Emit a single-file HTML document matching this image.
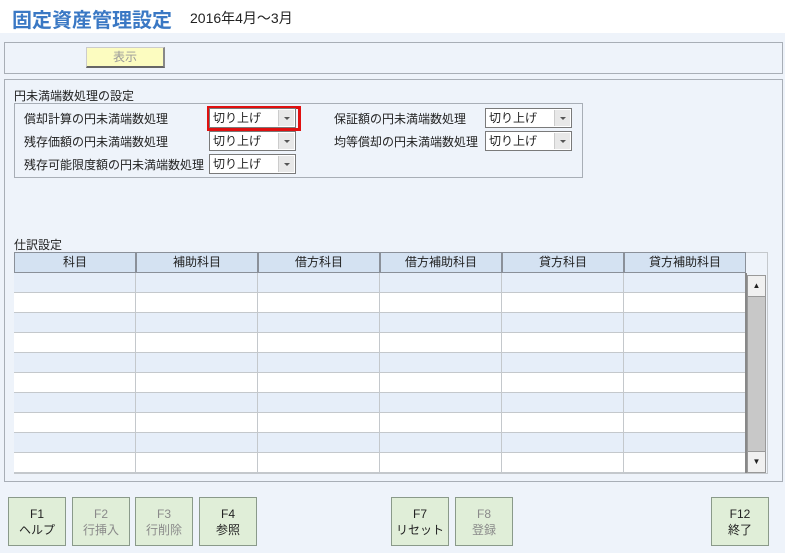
<!DOCTYPE html>
<html><head><meta charset="utf-8"><style>
*{box-sizing:border-box;margin:0;padding:0}
body{width:785px;height:553px;background:#eef3fa;font-family:"Liberation Sans","Noto Sans CJK JP",sans-serif;font-size:12px;color:#222;position:relative;overflow:hidden}
.a{position:absolute}
.title{left:0;top:0;width:785px;height:33px;background:#fff}
.title h1{position:absolute;left:12px;top:4px;font-size:20px;color:#3a78c4;font-weight:bold;letter-spacing:0px}
.title span{position:absolute;left:190px;top:8px;font-size:14px;color:#222}
.panel{border:1px solid #a8aeb6;background:#eef3fa}
.sel{position:absolute;width:87px;height:20px;background:#fff;border:1px solid #7a7a7a;font-size:12px;padding:2px 3px;line-height:14px}
.sel i{position:absolute;right:1px;top:1px;width:16px;height:16px;background:#e8e8e8;border-left:1px solid #ccc}
.sel i:after{content:"";position:absolute;left:5px;top:7px;border:3px solid transparent;border-top:3px solid #555}
.lbl{position:absolute;font-size:12px}
.hd{position:absolute;top:252px;height:21px;background:#d4e2f2;border:1px solid #8a9099;text-align:center;font-size:12px;line-height:18px}
.row{position:absolute;left:14px;width:732px;height:20px;border-bottom:1px solid #c4c8cc}
.fb{position:absolute;top:497px;width:58px;height:49px;background:#e0eed8;border:1px solid #8a9a8a;text-align:center;font-size:12px;line-height:16px;padding-top:8px}
.dis{color:#8a8a8a}
</style></head><body>
<div class="a title"><h1>固定資産管理設定</h1><span>2016年4月～3月</span></div>
<div class="a panel" style="left:4px;top:42px;width:779px;height:32px"></div>
<div class="a" style="left:86px;top:47px;width:79px;height:21px;background:#fcfcc0;border:1px solid #ccc;border-bottom:2px solid #666;border-right:2px solid #888;text-align:center;color:#999;line-height:18px">表示</div>
<div class="a panel" style="left:4px;top:79px;width:779px;height:403px"></div>
<div class="lbl" style="left:14px;top:87px">円未満端数処理の設定</div>
<div class="a" style="left:14px;top:103px;width:569px;height:75px;border:1px solid #a8aeb6"></div>
<div class="lbl" style="left:24px;top:110px">償却計算の円未満端数処理</div>
<div class="lbl" style="left:24px;top:133px">残存価額の円未満端数処理</div>
<div class="lbl" style="left:24px;top:156px">残存可能限度額の円未満端数処理</div>
<div class="lbl" style="left:334px;top:110px">保証額の円未満端数処理</div>
<div class="lbl" style="left:334px;top:133px">均等償却の円未満端数処理</div>
<div class="a" style="left:207px;top:106px;width:94px;height:25px;border:3px solid #e01010"></div>
<div class="sel" style="left:209px;top:108px">切り上げ<i></i></div>
<div class="sel" style="left:209px;top:131px">切り上げ<i></i></div>
<div class="sel" style="left:209px;top:154px">切り上げ<i></i></div>
<div class="sel" style="left:485px;top:108px">切り上げ<i></i></div>
<div class="sel" style="left:485px;top:131px">切り上げ<i></i></div>
<div class="lbl" style="left:14px;top:236px">仕訳設定</div>
<div class="a" style="left:14px;top:252px;width:754px;height:222px;border:1px solid #c4c8cc;background:#eef3fa"></div>
<div class="hd" style="left:14px;width:122px">科目</div>
<div class="hd" style="left:136px;width:122px">補助科目</div>
<div class="hd" style="left:258px;width:122px">借方科目</div>
<div class="hd" style="left:380px;width:122px">借方補助科目</div>
<div class="hd" style="left:502px;width:122px">貸方科目</div>
<div class="hd" style="left:624px;width:122px">貸方補助科目</div>
<div class="row" style="top:273px;background:#e6eef9"></div>
<div class="row" style="top:293px;background:#fff"></div>
<div class="row" style="top:313px;background:#e6eef9"></div>
<div class="row" style="top:333px;background:#fff"></div>
<div class="row" style="top:353px;background:#e6eef9"></div>
<div class="row" style="top:373px;background:#fff"></div>
<div class="row" style="top:393px;background:#e6eef9"></div>
<div class="row" style="top:413px;background:#fff"></div>
<div class="row" style="top:433px;background:#e6eef9"></div>
<div class="row" style="top:453px;background:#fff;height:20px"></div>
<div class="a" style="left:135px;top:273px;width:1px;height:200px;background:#c4c8cc"></div>
<div class="a" style="left:257px;top:273px;width:1px;height:200px;background:#c4c8cc"></div>
<div class="a" style="left:379px;top:273px;width:1px;height:200px;background:#c4c8cc"></div>
<div class="a" style="left:501px;top:273px;width:1px;height:200px;background:#c4c8cc"></div>
<div class="a" style="left:623px;top:273px;width:1px;height:200px;background:#c4c8cc"></div>
<div class="a" style="left:745px;top:273px;width:2px;height:200px;background:#888"></div>
<div class="a" style="left:747px;top:275px;width:19px;height:198px;background:#c8c8c8;border:1px solid #999"></div>
<div class="a" style="left:747px;top:275px;width:19px;height:22px;background:#f0f0f0;border:1px solid #999;text-align:center;font-size:8px;line-height:20px">▲</div>
<div class="a" style="left:747px;top:451px;width:19px;height:22px;background:#f0f0f0;border:1px solid #999;text-align:center;font-size:8px;line-height:20px">▼</div>
<div class="fb" style="left:8px">F1<br>ヘルプ</div>
<div class="fb dis" style="left:72px">F2<br>行挿入</div>
<div class="fb dis" style="left:135px">F3<br>行削除</div>
<div class="fb" style="left:199px">F4<br>参照</div>
<div class="fb" style="left:391px">F7<br>リセット</div>
<div class="fb dis" style="left:455px">F8<br>登録</div>
<div class="fb" style="left:711px">F12<br>終了</div>
</body></html>
